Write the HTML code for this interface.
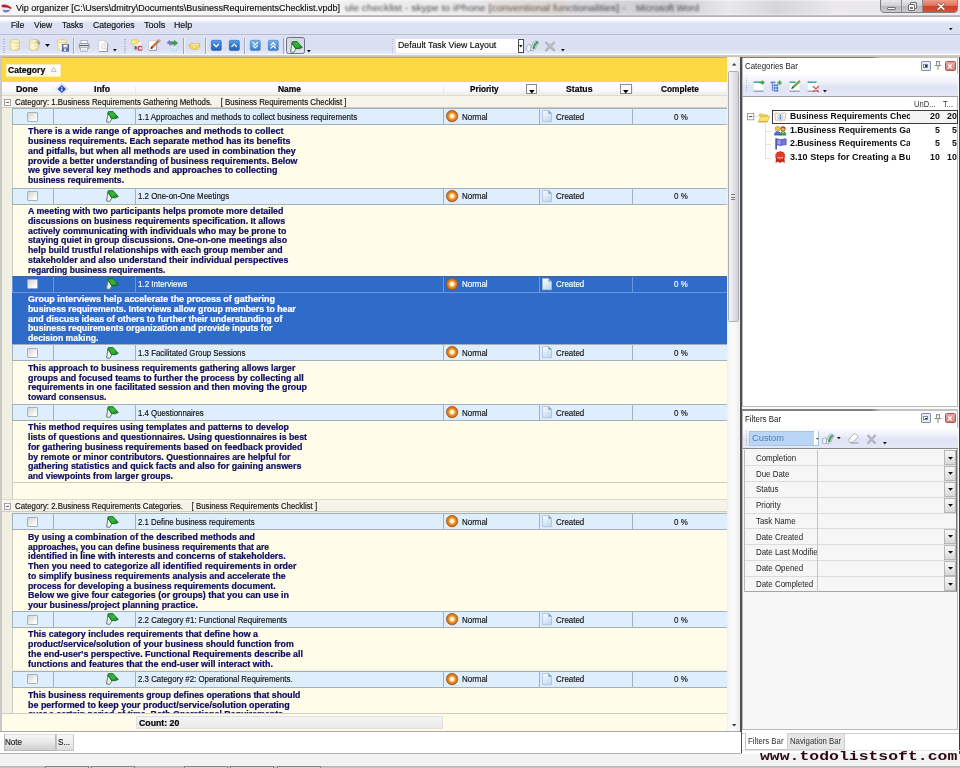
<!DOCTYPE html>
<html><head><meta charset="utf-8"><title>Vip organizer</title>
<style>
*{box-sizing:border-box;margin:0;padding:0}
html,body{width:960px;height:768px;overflow:hidden;background:#fff}
body{filter:blur(.35px);font-family:"Liberation Sans",sans-serif;font-size:9px;color:#000}
.a{position:absolute}
.t{position:absolute;white-space:pre;line-height:1;transform:scaleX(.9999);transform-origin:0 0}
svg{position:absolute;overflow:visible}
.row{background:#deeefc;border-top:1px solid #a3b1bd;border-bottom:1px solid #a3b1bd}
.row.sel{background:#2f6bc8;border-color:#6a97dc;border-top-color:#41649f}
.vs{background:#a3b1bd}
.sel .vs{background:#6a97dc}
.cb{border:1.2px solid #a7b0b9;border-radius:1px;background:linear-gradient(135deg,#d2d2d2,#ececec 50%,#fff 85%)}
.sel .cb{border-color:#8fa6cf}
.desc{background:#fffdea}
.desc.sel{background:#2f6bc8}
.dl{color:#0b0b60;font-weight:bold;-webkit-text-stroke:.22px #0b0b60}
.sel .dl{-webkit-text-stroke:.22px #fff}
.rt{-webkit-text-stroke:.16px currentColor}
.hb{-webkit-text-stroke:.2px #000}
.mono{font-family:"Liberation Mono",monospace}
.sel .dl,.dl.sel{color:#fff}
</style></head><body>
<div class="a " style="left:0px;top:0px;width:960px;height:17px;background:linear-gradient(90deg,#f6f6f7 0,#f3f3f4 30%,#e9e9eb 48%,#d9d9dc 60%,#cdcdd0 70%,#e9e8ec 76%,#d6d5d9 81%,#ebe9ee 87%,#e6e5ea 100%)"></div>
<div class="a " style="left:0px;top:0px;width:960px;height:15.3px;background:linear-gradient(rgba(255,255,255,.55),rgba(255,255,255,0) 12%,rgba(255,255,255,0) 80%,rgba(255,255,255,.25))"></div>
<div class="a " style="left:0px;top:15.3px;width:960px;height:1.8px;background:linear-gradient(#c4c4c6,#adadaf)"></div>
<div class="t rt" style="left:16.00px;top:3.68px;font-size:9.0px;color:#111;">Vip organizer [C:\Users\dmitry\Documents\BusinessRequirementsChecklist.vpdb]</div>
<div class="a " style="left:340px;top:0px;width:540px;height:15px;overflow:hidden"><div class="t " style="left:5.00px;top:4.41px;font-size:9.2px;transform:scaleX(1.1377);transform-origin:0 0;color:#2c2c2c;filter:blur(1.15px);opacity:.85;">ule checklist - skype to iPhone [conventional functionalities] -</div><div class="t " style="left:296.00px;top:4.41px;font-size:9.2px;transform:scaleX(1.0213);transform-origin:0 0;color:#2c2c2c;filter:blur(1.15px);opacity:.85;">Microsoft Word</div><div class="a " style="left:150px;top:3px;width:75px;height:10px;background:#c9a36a;opacity:.22;filter:blur(4px)"></div></div>
<svg style="left:0.4px;top:2.6px" width="12.5" height="11" viewBox="0 0 12.5 11"><ellipse cx="6.2" cy="5.6" rx="6" ry="5" fill="#f6e9ee"/>
<path d="M1.2 2.4C4 .6 7.6 1.8 11.4 4.6L11.2 6.2C7.6 4.4 4.6 3.8 2.6 4.6Z" fill="#c02436"/>
<path d="M2.4 3.2L6.6 4.2" stroke="#8e1423" stroke-width=".8"/>
<path d="M2.6 6.4C5 7.2 8 7.2 10.4 6.6C9 9.6 5.2 10.2 3.2 8.6Z" fill="#6d84d6"/></svg>
<div class="a " style="left:880.3px;top:-2px;width:78px;height:15px;border:1px solid #7f7f84;border-radius:0 0 4px 4px;overflow:hidden;background:#ccc"><div class="a " style="left:0px;top:0px;width:21px;height:15px;background:linear-gradient(#ececee,#d2d2d6 45%,#b9b9be 50%,#cfcfd3);border-right:1px solid #8b8b90"></div><div class="a " style="left:21px;top:0px;width:20.6px;height:15px;background:linear-gradient(#ececee,#d2d2d6 45%,#b9b9be 50%,#cfcfd3);border-right:1px solid #8b8b90"></div><div class="a " style="left:41.6px;top:0px;width:36px;height:15px;background:linear-gradient(#f0a592,#e0705a 45%,#cf4127 50%,#d9563c)"></div><div class="a " style="left:6.2px;top:7.6px;width:8.6px;height:3.2px;background:#fff;border:1px solid #6f6f74;border-radius:1px"></div><div class="a " style="left:28.4px;top:3.2px;width:7px;height:6.4px;background:#e8e8ea;border:1px solid #6f6f74;border-radius:1px"></div><div class="a " style="left:26.6px;top:5.2px;width:7px;height:6.4px;background:#f8f8fa;border:1px solid #6f6f74;border-radius:1px"></div><div class="a " style="left:28.8px;top:7.6px;width:2.6px;height:2.2px;background:#7b7b80"></div><svg style="left:55.6px;top:3.8px" width="8" height="7.2" viewBox="0 0 8 7.2"><path d="M1.2 1L6.8 6.2M6.8 1L1.2 6.2" stroke="#8a3a2a" stroke-width="2.6" stroke-linecap="round"/><path d="M1.2 1L6.8 6.2M6.8 1L1.2 6.2" stroke="#fff" stroke-width="1.7" stroke-linecap="round"/></svg></div>
<div class="a " style="left:0px;top:17px;width:960px;height:17.5px;background:linear-gradient(#fff 0,#fcfdff 14%,#e9edf8 26%,#dce1f3 36%,#dbe0f2 90%,#e9edf8 100%)"></div>
<div class="a " style="left:0px;top:34px;width:960px;height:1.2px;background:#b6bcd0"></div>
<div class="t rt" style="left:11.20px;top:21.47px;font-size:8.9px;transform:scaleX(0.9274);transform-origin:0 0;color:#101010;">File</div>
<div class="t rt" style="left:33.80px;top:21.47px;font-size:8.9px;transform:scaleX(0.9513);transform-origin:0 0;color:#101010;">View</div>
<div class="t rt" style="left:62.00px;top:21.47px;font-size:8.9px;transform:scaleX(0.9318);transform-origin:0 0;color:#101010;">Tasks</div>
<div class="t rt" style="left:92.50px;top:21.47px;font-size:8.9px;transform:scaleX(0.9689);transform-origin:0 0;color:#101010;">Categories</div>
<div class="t rt" style="left:143.70px;top:21.47px;font-size:8.9px;transform:scaleX(1.0252);transform-origin:0 0;color:#101010;">Tools</div>
<div class="t rt" style="left:174.20px;top:21.47px;font-size:8.9px;transform:scaleX(0.9943);transform-origin:0 0;color:#101010;">Help</div>
<div class="a " style="left:0px;top:35.2px;width:960px;height:19px;background:linear-gradient(#e1e6f5 0,#dbe0f2 12%,#dadff1 70%,#e7ecfa 100%)"></div>
<div class="a " style="left:0px;top:54.2px;width:960px;height:1px;background:#f8f9fe"></div>
<div class="a " style="left:0px;top:55.2px;width:960px;height:1.8px;background:linear-gradient(#d6cfd3,#c9bfa8)"></div>
<div class="a " style="left:3px;top:38.5px;width:1.6px;height:16px;background:repeating-linear-gradient(#aab2cb 0,#aab2cb 1px,transparent 1px,transparent 2.25px);opacity:.8"></div>
<svg style="left:9.8px;top:39.4px" width="12" height="12.5" viewBox="0 0 12 12.5"><defs><linearGradient id="dbg" x1="0" x2="1"><stop offset="0" stop-color="#efe3a4"/><stop offset=".35" stop-color="#fdf8d2"/><stop offset="1" stop-color="#dccb7e"/></linearGradient></defs>
<path d="M.4 2.2C.4 .2 9.6 .2 9.6 2.2V9.6C9.6 12 .4 12 .4 9.6Z" fill="url(#dbg)" stroke="#cdbd78" stroke-width=".6"/>
<ellipse cx="5" cy="2.2" rx="4.4" ry="1.5" fill="#fbf4c6" stroke="#d5c682" stroke-width=".5"/>
<path d="M.6 5C2 6.6 8 6.6 9.4 5M.6 7.6C2 9.2 8 9.2 9.4 7.6" fill="none" stroke="#fffbe0" stroke-width=".9"/></svg>
<svg style="left:28.6px;top:39.4px" width="12" height="12.5" viewBox="0 0 12 12.5"><defs><linearGradient id="dbg" x1="0" x2="1"><stop offset="0" stop-color="#efe3a4"/><stop offset=".35" stop-color="#fdf8d2"/><stop offset="1" stop-color="#dccb7e"/></linearGradient></defs>
<path d="M.4 2.2C.4 .2 9.6 .2 9.6 2.2V9.6C9.6 12 .4 12 .4 9.6Z" fill="url(#dbg)" stroke="#cdbd78" stroke-width=".6"/>
<ellipse cx="5" cy="2.2" rx="4.4" ry="1.5" fill="#fbf4c6" stroke="#d5c682" stroke-width=".5"/>
<path d="M.6 5C2 6.6 8 6.6 9.4 5M.6 7.6C2 9.2 8 9.2 9.4 7.6" fill="none" stroke="#fffbe0" stroke-width=".9"/><path d="M6.4 .4L9.4 .9L11.2 3.4L10.4 6.4L8.2 3.4Z" fill="#8a90a6" opacity=".85"/><path d="M6.6 1.2L8.8 1.6L9.6 3.4" stroke="#e8eaf2" stroke-width=".7" fill="none"/></svg>
<svg style="left:45px;top:44px" width="5" height="2.9" viewBox="0 0 5 2.9"><path d="M0 0H5L2.5 2.9Z" fill="#111"/></svg>
<svg style="left:57px;top:39.2px" width="12" height="12.5" viewBox="0 0 12 12.5"><defs><linearGradient id="dbg" x1="0" x2="1"><stop offset="0" stop-color="#efe3a4"/><stop offset=".35" stop-color="#fdf8d2"/><stop offset="1" stop-color="#dccb7e"/></linearGradient></defs>
<path d="M.4 2.2C.4 .2 9.6 .2 9.6 2.2V9.6C9.6 12 .4 12 .4 9.6Z" fill="url(#dbg)" stroke="#cdbd78" stroke-width=".6"/>
<ellipse cx="5" cy="2.2" rx="4.4" ry="1.5" fill="#fbf4c6" stroke="#d5c682" stroke-width=".5"/>
<path d="M.6 5C2 6.6 8 6.6 9.4 5M.6 7.6C2 9.2 8 9.2 9.4 7.6" fill="none" stroke="#fffbe0" stroke-width=".9"/><rect x="5.2" y="5.6" width="6.6" height="6.6" fill="#5b6fb8" stroke="#3f4f93" stroke-width=".5"/><rect x="6.4" y="5.8" width="4" height="2.6" fill="#eef0f8"/><rect x="7" y="9.6" width="3" height="2.4" fill="#dfe3f2"/><rect x="9" y="9.9" width=".9" height="1.8" fill="#2c396f"/></svg>
<div class="a " style="left:72.6px;top:38px;width:1.1px;height:15.5px;background:#9ea6c0"></div><div class="a " style="left:73.69999999999999px;top:38px;width:0.9px;height:15.5px;background:#eef1fa"></div>
<svg style="left:79px;top:40px" width="10.5" height="12" viewBox="0 0 10.5 12"><rect x="2" y=".4" width="6.4" height="3.4" fill="#fff" stroke="#8d93a6" stroke-width=".6"/>
<rect x=".4" y="3.6" width="9.6" height="4.8" rx=".8" fill="#e9ebf1" stroke="#70768a" stroke-width=".7"/>
<path d="M.6 5.6H9.8" stroke="#4b5164" stroke-width="1"/>
<rect x="1.8" y="7.4" width="6.8" height="4" fill="#fff" stroke="#8d93a6" stroke-width=".6"/><path d="M2.8 9.2H7.6M2.8 10.4H7.6" stroke="#b5b9c8" stroke-width=".5"/></svg>
<svg style="left:97.6px;top:39.8px" width="11" height="12.2" viewBox="0 0 11 12.2"><path d="M.6 .4H7.2L9.8 3V11.4H.6Z" fill="#fff" stroke="#b8bccb" stroke-width=".6"/>
<path d="M7.2 .4V3H9.8" fill="#e3e6ef" stroke="#b8bccb" stroke-width=".5"/>
<path d="M9.6 3.4V11.6H1.4" stroke="#8d92a4" stroke-width=".9" fill="none"/>
<circle cx="5.6" cy="6.4" r="2.4" fill="#f5f6fa" stroke="#c9ccd8" stroke-width=".7"/><path d="M7.3 8.2L9 10" stroke="#d79a9a" stroke-width=".9"/></svg>
<svg style="left:113px;top:49px" width="3.8" height="2.4" viewBox="0 0 3.8 2.4"><path d="M0 0H3.8L1.9 2.4Z" fill="#111"/></svg>
<div class="a " style="left:124.4px;top:38.5px;width:1.6px;height:16px;background:repeating-linear-gradient(#aab2cb 0,#aab2cb 1px,transparent 1px,transparent 2.25px);opacity:.8"></div>
<svg style="left:130.8px;top:39.4px" width="12.4" height="12" viewBox="0 0 12.4 12"><path d="M3 2.4H9.2L11 4.4V11.4H3Z" fill="#fff" stroke="#b9bdcc" stroke-width=".6"/>
<path d="M.4 .6H6.6L7.6 3.2L6.2 5.6H.4Z" fill="#f7e37a" stroke="#d9c24e" stroke-width=".5"/>
<path d="M1.6 2L4.8 3.1L1.6 4.4Z" fill="#fff7b0"/>
<rect x="3.6" y="7" width="2.2" height="3.6" fill="#5a5f78"/>
<circle cx="9" cy="9.2" r="2.6" fill="#d9414f"/><circle cx="9.3" cy="9.2" r="1.2" fill="#fff"/><rect x="9.6" y="8.6" width="2" height="1.2" fill="#fff" opacity=".9"/></svg>
<svg style="left:148.2px;top:39.4px" width="13" height="12" viewBox="0 0 13 12"><path d="M.6 1.8H8.4V11.2H.6Z" fill="#fff" stroke="#b8bccb" stroke-width=".6"/>
<path d="M8.6 6V11.4H1.2" stroke="#8d92a4" stroke-width=".8" fill="none"/>
<path d="M2.6 9.8L3.2 7.8L9.8 1.4L11.2 2.8L4.6 9.2Z" fill="#c9793a" stroke="#8a4e22" stroke-width=".4"/>
<path d="M9.6 1.2L11 .4L12.4 1.8L11.6 3Z" fill="#e8a0a0" stroke="#a55" stroke-width=".4"/>
<path d="M2.6 9.8L3.4 7.4L5.2 9Z" fill="#3d3d46"/></svg>
<svg style="left:167px;top:39.6px" width="11.6" height="12" viewBox="0 0 11.6 12"><path d="M.4 2.2L2.4 .6L4.4 2.2L3.2 2.6L4.4 4.6L3 5.2L1.8 3.2L.8 3.8Z" fill="#7b78c9" stroke="#5a56ad" stroke-width=".4"/>
<path d="M4.6 1.8H7.4V.4L10.8 3L7.4 5.6V4.2H4.6Z" fill="#32a546" stroke="#1e7d30" stroke-width=".5"/>
<path d="M3.6 6.4H10.2L9.4 11.2H4.6Z" fill="#cfe6f7" stroke="#a5cbe6" stroke-width=".5"/><path d="M4 7.4H9.8" stroke="#eff8ff" stroke-width=".8"/></svg>
<div class="a " style="left:182.6px;top:38px;width:1.1px;height:15.5px;background:#9ea6c0"></div><div class="a " style="left:183.7px;top:38px;width:0.9px;height:15.5px;background:#eef1fa"></div>
<svg style="left:188.2px;top:41.6px" width="12.4" height="8.6" viewBox="0 0 12.4 8.6"><path d="M.5 3.6L3.6 1.2L7.6 2L11.8 1.4L11.6 5L8.2 7.8L5.4 7.2L3.4 6.8Z" fill="#f4d867" stroke="#c9a93a" stroke-width=".6" stroke-linejoin="round"/>
<path d="M3.6 2L7.2 2.8L10.6 2.2" stroke="#fff4b8" stroke-width=".8" fill="none"/>
<ellipse cx="6.4" cy="4.8" rx="1.7" ry="1.1" fill="#fffbe2" stroke="#c9a93a" stroke-width=".4"/></svg>
<div class="a " style="left:204.6px;top:38px;width:1.1px;height:15.5px;background:#9ea6c0"></div><div class="a " style="left:205.7px;top:38px;width:0.9px;height:15.5px;background:#eef1fa"></div>
<svg style="left:210.5px;top:40.2px" width="10.6" height="10.9" viewBox="0 0 10.6 10.9"><defs><linearGradient id="bbdown" x1="0" y1="0" x2="0" y2="1"><stop offset="0" stop-color="#5fa0ea"/><stop offset=".5" stop-color="#2f78d0"/><stop offset="1" stop-color="#2a62b4"/></linearGradient></defs><rect x=".3" y=".3" width="10" height="10.3" rx="1.4" fill="url(#bbdown)" stroke="#2a62b4" stroke-width=".6"/><path d="M2.8 4.3L5.2 6.8L7.6 4.3" fill="none" stroke="#fff" stroke-width="1.25" stroke-linecap="round" stroke-linejoin="round"/></svg>
<svg style="left:228.7px;top:40.2px" width="10.6" height="10.9" viewBox="0 0 10.6 10.9"><defs><linearGradient id="bbup" x1="0" y1="0" x2="0" y2="1"><stop offset="0" stop-color="#5fa0ea"/><stop offset=".5" stop-color="#2f78d0"/><stop offset="1" stop-color="#2a62b4"/></linearGradient></defs><rect x=".3" y=".3" width="10" height="10.3" rx="1.4" fill="url(#bbup)" stroke="#2a62b4" stroke-width=".6"/><path d="M2.8 6.6L5.2 4.1L7.6 6.6" fill="none" stroke="#fff" stroke-width="1.25" stroke-linecap="round" stroke-linejoin="round"/></svg>
<div class="a " style="left:243.8px;top:38px;width:1.1px;height:15.5px;background:#9ea6c0"></div><div class="a " style="left:244.9px;top:38px;width:0.9px;height:15.5px;background:#eef1fa"></div>
<svg style="left:250.1px;top:40.1px" width="10.6" height="10.9" viewBox="0 0 10.6 10.9"><defs><linearGradient id="bbddown" x1="0" y1="0" x2="0" y2="1"><stop offset="0" stop-color="#7fb4e8"/><stop offset=".5" stop-color="#4f93d6"/><stop offset="1" stop-color="#3e7fc4"/></linearGradient></defs><rect x=".3" y=".3" width="10" height="10.3" rx="1.4" fill="url(#bbddown)" stroke="#3e7fc4" stroke-width=".6"/><path d="M2.9 2.6L5.2 4.9L7.5 2.6M2.9 5.6L5.2 7.9L7.5 5.6" fill="none" stroke="#fff" stroke-width="1.25" stroke-linecap="round" stroke-linejoin="round"/></svg>
<svg style="left:268.2px;top:40.1px" width="10.6" height="10.9" viewBox="0 0 10.6 10.9"><defs><linearGradient id="bbdup" x1="0" y1="0" x2="0" y2="1"><stop offset="0" stop-color="#7fb4e8"/><stop offset=".5" stop-color="#4f93d6"/><stop offset="1" stop-color="#3e7fc4"/></linearGradient></defs><rect x=".3" y=".3" width="10" height="10.3" rx="1.4" fill="url(#bbdup)" stroke="#3e7fc4" stroke-width=".6"/><path d="M2.9 5.1L5.2 2.8L7.5 5.1M2.9 8.1L5.2 5.8L7.5 8.1" fill="none" stroke="#fff" stroke-width="1.25" stroke-linecap="round" stroke-linejoin="round"/></svg>
<div class="a " style="left:283.4px;top:38px;width:1.1px;height:15.5px;background:#9ea6c0"></div><div class="a " style="left:284.5px;top:38px;width:0.9px;height:15.5px;background:#eef1fa"></div>
<div class="a " style="left:286.2px;top:37.3px;width:18.8px;height:16.8px;border:1.6px solid #6c7186;border-radius:2.5px;background:linear-gradient(#d3d6e0,#e0e3ec)"></div>
<svg style="left:289.8px;top:40.6px" width="13" height="12" viewBox="0 0 13 12"><defs><linearGradient id="gfg" x1="0" y1="0" x2="1" y2="1"><stop offset="0" stop-color="#2c9f2e"/><stop offset=".5" stop-color="#35b83a"/><stop offset="1" stop-color="#157a1c"/></linearGradient></defs>
<path d="M1.9 2.8L.5 10.8L3.5 11.5L5.8 8.2L3.2 3.8Z" fill="#eaf3ed" stroke="#5f7d6c" stroke-width="1" stroke-linejoin="round"/>
<path d="M2.2 .7L7 .5L12.3 6.4L9 7.8L5.5 7.4L3.3 3.7L1.7 3.1Z" fill="url(#gfg)" stroke="#0e5f16" stroke-width=".8" stroke-linejoin="round"/></svg>
<svg style="left:306.7px;top:49.6px" width="3.8" height="2.4" viewBox="0 0 3.8 2.4"><path d="M0 0H3.8L1.9 2.4Z" fill="#111"/></svg>
<div class="a " style="left:391.6px;top:38.5px;width:1.6px;height:16px;background:repeating-linear-gradient(#aab2cb 0,#aab2cb 1px,transparent 1px,transparent 2.25px);opacity:.8"></div>
<div class="a " style="left:395px;top:38px;width:128.6px;height:15.8px;background:#fff;border:1px solid #e3e6ef"></div>
<div class="t rt" style="left:397.50px;top:41.37px;font-size:8.9px;transform:scaleX(0.9889);transform-origin:0 0;color:#111;">Default Task View Layout</div>
<div class="a " style="left:517.7px;top:38.6px;width:6px;height:14.6px;background:#fff;border:1px solid #4c4c4c"><svg style="left:0.3px;top:5.4px" width="3.6" height="2.4" viewBox="0 0 3.6 2.4"><path d="M0 0H3.6L1.8 2.4Z" fill="#111"/></svg></div>
<svg style="left:526.4px;top:40px" width="13.4" height="12" viewBox="0 0 13.4 12"><path d="M.6 6.2L3 4.4L5 5.4V10.4L2.2 11.4L.6 10Z" fill="#f3f5fa" stroke="#8c93b3" stroke-width=".7"/>
<path d="M4.6 8.8L7.4 2.2L10 .8L12.6 2.6L10.8 5.4L8.6 9.8L5.8 11Z" fill="#eef1f9" stroke="#8c93b3" stroke-width=".7"/>
<path d="M6.4 8.6L8.4 3.4L10.6 2L11.4 3.2L9.6 5L8 9Z" fill="#3aa84c" stroke="#1f8434" stroke-width=".4"/>
<path d="M9.6 1.4L12.2 1.2L12 3.8Z" fill="#2c9a40"/></svg>
<svg style="left:545.2px;top:41px" width="10.4" height="10.4" viewBox="0 0 10.4 10.4"><path d="M1.2 1.6L9 9.2M9 1.6L1.2 9.2" stroke="#a9acb4" stroke-width="2.3" stroke-linecap="round"/><path d="M1.6 1.4L9 8.6M8.8 1.4L1.4 8.8" stroke="#c9ccd3" stroke-width=".8" stroke-linecap="round"/></svg>
<svg style="left:561.2px;top:49.4px" width="3.8" height="2.4" viewBox="0 0 3.8 2.4"><path d="M0 0H3.8L1.9 2.4Z" fill="#111"/></svg>
<svg style="left:949.4px;top:28.4px" width="3.6" height="2.3" viewBox="0 0 3.6 2.3"><path d="M0 0H3.6L1.8 2.3Z" fill="#111"/></svg>
<div class="a " style="left:0px;top:57px;width:741px;height:674px;background:#f1efe2"></div>
<div class="a " style="left:0px;top:56.6px;width:727.2px;height:25.5px;background:#fcd942;border-top:1px solid #bfac62"></div>
<div class="a " style="left:6px;top:64px;width:54.5px;height:12.5px;background:linear-gradient(#fffefa,#fffae6);border:1px solid #fbeeb4"></div>
<div class="t hb" style="left:7.80px;top:66.40px;font-size:9.1px;font-weight:bold;transform:scaleX(0.9431);transform-origin:0 0;">Category</div>
<svg style="left:50.6px;top:67.4px" width="6" height="5.4"><path d="M2.7 .5 L5.1 4.6 L.3 4.6 Z" fill="#fff" stroke="#9aa7c4" stroke-width=".7"/></svg>
<div class="a " style="left:2px;top:82px;width:725.5px;height:13px;background:linear-gradient(#fff,#fcfcfc 55%,#ececec)"></div>
<div class="t hb" style="left:16.00px;top:84.90px;font-size:9.1px;font-weight:bold;transform:scaleX(0.967);transform-origin:0 0;">Done</div>
<div class="t hb" style="left:93.80px;top:84.90px;font-size:9.1px;font-weight:bold;transform:scaleX(0.9714);transform-origin:0 0;">Info</div>
<div class="t hb" style="left:278.00px;top:84.90px;font-size:9.1px;font-weight:bold;transform:scaleX(0.9279);transform-origin:0 0;">Name</div>
<div class="t hb" style="left:470.00px;top:84.90px;font-size:9.1px;font-weight:bold;transform:scaleX(0.9008);transform-origin:0 0;">Priority</div>
<div class="t hb" style="left:566.00px;top:84.90px;font-size:9.1px;font-weight:bold;transform:scaleX(0.9528);transform-origin:0 0;">Status</div>
<div class="t hb" style="left:660.60px;top:84.90px;font-size:9.1px;font-weight:bold;transform:scaleX(0.9165);transform-origin:0 0;">Complete</div>
<div class="a " style="left:53px;top:86px;width:1px;height:8.5px;background:#ebebf0"></div>
<div class="a " style="left:135px;top:86px;width:1px;height:8.5px;background:#ebebf0"></div>
<div class="a " style="left:443.2px;top:86px;width:1px;height:8.5px;background:#ebebf0"></div>
<div class="a " style="left:538.6px;top:86px;width:1px;height:8.5px;background:#ebebf0"></div>
<div class="a " style="left:632.4px;top:86px;width:1px;height:8.5px;background:#ebebf0"></div>
<svg style="left:55px;top:83px" width="13.6" height="12" viewBox="0 0 13.6 12"><path d="M6.8 .4L13.2 6L6.8 11.6L.4 6Z" fill="#eaf1fe" stroke="#c3d6f6" stroke-width=".8"/>
<path d="M6.8 2.2L10.8 6L6.8 9.8L2.8 6Z" fill="#2c4ba3" stroke="#20397f" stroke-width=".4"/>
<rect x="6.25" y="3.7" width="1.1" height="1.1" fill="#fff"/><rect x="6.25" y="5.5" width="1.1" height="2.7" fill="#fff"/></svg>
<div class="a " style="left:525.5px;top:84.1px;width:11.7px;height:9.6px;border:1px solid #8c8c84;background:#fff"><svg style="left:2.1px;top:4.6px" width="5.6" height="3.4" viewBox="0 0 5.6 3.4"><path d="M0 0H5.6L2.8 3.4Z" fill="#000"/></svg></div>
<div class="a " style="left:620.2px;top:84.1px;width:11.7px;height:9.6px;border:1px solid #8c8c84;background:#fff"><svg style="left:2.1px;top:4.6px" width="5.6" height="3.4" viewBox="0 0 5.6 3.4"><path d="M0 0H5.6L2.8 3.4Z" fill="#000"/></svg></div>
<div class="a " style="left:2px;top:94.9px;width:725.5px;height:13.3px;background:#f6f4e8;border-top:1px solid #dddbcc;border-bottom:1px solid #cfcdc0"></div>
<svg style="left:4.2px;top:98.9px" width="7" height="7"><rect x=".4" y=".4" width="6" height="6" fill="#fff" stroke="#8f8f8f" stroke-width=".8"/><path d="M1.8 3.4H5" stroke="#333" stroke-width=".8"/></svg>
<div class="t rt" style="left:14.50px;top:97.91px;font-size:9.2px;transform:scaleX(0.8554);transform-origin:0 0;color:#101010;">Category: 1.Business Requirements Gathering Methods.    [ Business Requirements Checklist ]</div>
<div class="a " style="left:2px;top:499.2px;width:725.5px;height:13.3px;background:#f6f4e8;border-top:1px solid #dddbcc;border-bottom:1px solid #cfcdc0"></div>
<svg style="left:4.2px;top:503.2px" width="7" height="7"><rect x=".4" y=".4" width="6" height="6" fill="#fff" stroke="#8f8f8f" stroke-width=".8"/><path d="M1.8 3.4H5" stroke="#333" stroke-width=".8"/></svg>
<div class="t rt" style="left:14.50px;top:502.21px;font-size:9.2px;transform:scaleX(0.8537);transform-origin:0 0;color:#101010;">Category: 2.Business Requirements Categories.    [ Business Requirements Checklist ]</div>
<div class="a " style="left:12px;top:481.8px;width:714.8px;height:17.7px;background:#fffdea;border-top:1px solid #cfcdc0;border-left:1px solid #cfcdc0"></div>
<div class="a desc" style="left:12px;top:124.5px;width:714.8px;height:63.099999999999994px;border-left:1px solid #cfcdc0;overflow:hidden"><div class="t dl" style="left:15.30px;top:2.98px;font-size:9.0px;font-weight:bold;transform:scaleX(0.9974);transform-origin:0 0;">There is a wide range of approaches and methods to collect</div><div class="t dl" style="left:15.30px;top:12.73px;font-size:9.0px;font-weight:bold;transform:scaleX(0.9806);transform-origin:0 0;">business requirements. Each separate method has its benefits</div><div class="t dl" style="left:15.30px;top:22.48px;font-size:9.0px;font-weight:bold;transform:scaleX(0.9859);transform-origin:0 0;">and pitfalls, but when all methods are used in combination they</div><div class="t dl" style="left:15.30px;top:32.23px;font-size:9.0px;font-weight:bold;transform:scaleX(0.9759);transform-origin:0 0;">provide a better understanding of business requirements. Below</div><div class="t dl" style="left:15.30px;top:41.98px;font-size:9.0px;font-weight:bold;transform:scaleX(0.9953);transform-origin:0 0;">we give several key methods and approaches to collecting</div><div class="t dl" style="left:15.30px;top:51.73px;font-size:9.0px;font-weight:bold;transform:scaleX(0.9502);transform-origin:0 0;">business requirements.</div></div>
<div class="a row" style="left:12px;top:108.0px;width:714.8px;height:17px;border-left:1px solid #a3b1bd"><div class="a vs" style="left:40px;top:0;width:1px;height:15px"></div><div class="a vs" style="left:122px;top:0;width:1px;height:15px"></div><div class="a vs" style="left:430.3px;top:0;width:1px;height:15px"></div><div class="a vs" style="left:525.7px;top:0;width:1px;height:15px"></div><div class="a vs" style="left:618.9px;top:0;width:1px;height:15px"></div><div class="a cb" style="left:14.4px;top:2.7px;width:10.4px;height:10px"></div><div class="t rt" style="left:124.50px;top:3.81px;font-size:9.2px;transform:scaleX(0.8653);transform-origin:0 0;color:#101010;">1.1 Approaches and methods to collect business requirements</div><div class="t rt" style="left:448.70px;top:3.81px;font-size:9.2px;transform:scaleX(0.865);transform-origin:0 0;color:#101010;">Normal</div><div class="t rt" style="left:542.80px;top:3.81px;font-size:9.2px;transform:scaleX(0.865);transform-origin:0 0;color:#101010;">Created</div><div class="t rt" style="left:660.50px;top:3.81px;font-size:9.2px;transform:scaleX(0.865);transform-origin:0 0;color:#101010;">0 %</div><svg style="left:93px;top:1.6px" width="13" height="12" viewBox="0 0 13 12"><defs><linearGradient id="gfg" x1="0" y1="0" x2="1" y2="1"><stop offset="0" stop-color="#2c9f2e"/><stop offset=".5" stop-color="#35b83a"/><stop offset="1" stop-color="#157a1c"/></linearGradient></defs>
<path d="M1.9 2.8L.5 10.8L3.5 11.5L5.8 8.2L3.2 3.8Z" fill="#eaf3ed" stroke="#5f7d6c" stroke-width="1" stroke-linejoin="round"/>
<path d="M2.2 .7L7 .5L12.3 6.4L9 7.8L5.5 7.4L3.3 3.7L1.7 3.1Z" fill="url(#gfg)" stroke="#0e5f16" stroke-width=".8" stroke-linejoin="round"/></svg><svg style="left:433.3px;top:1.2px" width="12.2" height="12.2" viewBox="0 0 12.2 12.2"><defs><radialGradient id="prg" cx=".5" cy=".5" r=".55"><stop offset="0" stop-color="#fff8d8"/><stop offset=".3" stop-color="#ffefc0"/><stop offset=".44" stop-color="#efa448"/><stop offset=".75" stop-color="#d27416"/><stop offset="1" stop-color="#a9570d"/></radialGradient></defs>
<circle cx="6.1" cy="6.1" r="5.8" fill="url(#prg)" stroke="#9c561a" stroke-width=".6"/></svg><svg style="left:529.2px;top:1.2px" width="10" height="12.2" viewBox="0 0 10 12.2"><defs><linearGradient id="dcg" x1="0" y1="0" x2=".6" y2="1"><stop offset="0" stop-color="#fdfeff"/><stop offset="1" stop-color="#c2dbf3"/></linearGradient></defs>
<path d="M.5 .5H6.6L9.5 3.4V11.7H.5Z" fill="url(#dcg)" stroke="#a4bedb" stroke-width=".8"/>
<path d="M6.6 .5V3.4H9.5Z" fill="#7d9cc4" stroke="#7d9cc4" stroke-width=".4"/></svg></div>
<div class="a desc" style="left:12px;top:204.1px;width:714.8px;height:71.50000000000003px;border-left:1px solid #cfcdc0;overflow:hidden"><div class="t dl" style="left:15.30px;top:2.98px;font-size:9.0px;font-weight:bold;transform:scaleX(0.9797);transform-origin:0 0;">A meeting with two participants helps promote more detailed</div><div class="t dl" style="left:15.30px;top:12.73px;font-size:9.0px;font-weight:bold;transform:scaleX(0.9714);transform-origin:0 0;">discussions on business requirements specification. It allows</div><div class="t dl" style="left:15.30px;top:22.48px;font-size:9.0px;font-weight:bold;transform:scaleX(0.9768);transform-origin:0 0;">actively communicating with individuals who may be prone to</div><div class="t dl" style="left:15.30px;top:32.23px;font-size:9.0px;font-weight:bold;transform:scaleX(0.9717);transform-origin:0 0;">staying quiet in group discussions. One-on-one meetings also</div><div class="t dl" style="left:15.30px;top:41.98px;font-size:9.0px;font-weight:bold;transform:scaleX(0.972);transform-origin:0 0;">help build trustful relationships with each group member and</div><div class="t dl" style="left:15.30px;top:51.73px;font-size:9.0px;font-weight:bold;transform:scaleX(0.9824);transform-origin:0 0;">stakeholder and also understand their individual perspectives</div><div class="t dl" style="left:15.30px;top:61.48px;font-size:9.0px;font-weight:bold;transform:scaleX(0.9473);transform-origin:0 0;">regarding business requirements.</div></div>
<div class="a row" style="left:12px;top:187.6px;width:714.8px;height:17px;border-left:1px solid #a3b1bd"><div class="a vs" style="left:40px;top:0;width:1px;height:15px"></div><div class="a vs" style="left:122px;top:0;width:1px;height:15px"></div><div class="a vs" style="left:430.3px;top:0;width:1px;height:15px"></div><div class="a vs" style="left:525.7px;top:0;width:1px;height:15px"></div><div class="a vs" style="left:618.9px;top:0;width:1px;height:15px"></div><div class="a cb" style="left:14.4px;top:2.7px;width:10.4px;height:10px"></div><div class="t rt" style="left:124.50px;top:3.81px;font-size:9.2px;transform:scaleX(0.8574);transform-origin:0 0;color:#101010;">1.2 One-on-One Meetings</div><div class="t rt" style="left:448.70px;top:3.81px;font-size:9.2px;transform:scaleX(0.865);transform-origin:0 0;color:#101010;">Normal</div><div class="t rt" style="left:542.80px;top:3.81px;font-size:9.2px;transform:scaleX(0.865);transform-origin:0 0;color:#101010;">Created</div><div class="t rt" style="left:660.50px;top:3.81px;font-size:9.2px;transform:scaleX(0.865);transform-origin:0 0;color:#101010;">0 %</div><svg style="left:93px;top:1.6px" width="13" height="12" viewBox="0 0 13 12"><defs><linearGradient id="gfg" x1="0" y1="0" x2="1" y2="1"><stop offset="0" stop-color="#2c9f2e"/><stop offset=".5" stop-color="#35b83a"/><stop offset="1" stop-color="#157a1c"/></linearGradient></defs>
<path d="M1.9 2.8L.5 10.8L3.5 11.5L5.8 8.2L3.2 3.8Z" fill="#eaf3ed" stroke="#5f7d6c" stroke-width="1" stroke-linejoin="round"/>
<path d="M2.2 .7L7 .5L12.3 6.4L9 7.8L5.5 7.4L3.3 3.7L1.7 3.1Z" fill="url(#gfg)" stroke="#0e5f16" stroke-width=".8" stroke-linejoin="round"/></svg><svg style="left:433.3px;top:1.2px" width="12.2" height="12.2" viewBox="0 0 12.2 12.2"><defs><radialGradient id="prg" cx=".5" cy=".5" r=".55"><stop offset="0" stop-color="#fff8d8"/><stop offset=".3" stop-color="#ffefc0"/><stop offset=".44" stop-color="#efa448"/><stop offset=".75" stop-color="#d27416"/><stop offset="1" stop-color="#a9570d"/></radialGradient></defs>
<circle cx="6.1" cy="6.1" r="5.8" fill="url(#prg)" stroke="#9c561a" stroke-width=".6"/></svg><svg style="left:529.2px;top:1.2px" width="10" height="12.2" viewBox="0 0 10 12.2"><defs><linearGradient id="dcg" x1="0" y1="0" x2=".6" y2="1"><stop offset="0" stop-color="#fdfeff"/><stop offset="1" stop-color="#c2dbf3"/></linearGradient></defs>
<path d="M.5 .5H6.6L9.5 3.4V11.7H.5Z" fill="url(#dcg)" stroke="#a4bedb" stroke-width=".8"/>
<path d="M6.6 .5V3.4H9.5Z" fill="#7d9cc4" stroke="#7d9cc4" stroke-width=".4"/></svg></div>
<div class="a desc sel" style="left:12px;top:292.1px;width:714.8px;height:52.19999999999999px;border-left:1px solid #2f6bc8;overflow:hidden"><div class="t dl" style="left:15.30px;top:2.98px;font-size:9.0px;font-weight:bold;transform:scaleX(0.9937);transform-origin:0 0;">Group interviews help accelerate the process of gathering</div><div class="t dl" style="left:15.30px;top:12.73px;font-size:9.0px;font-weight:bold;transform:scaleX(0.9714);transform-origin:0 0;">business requirements. Interviews allow group members to hear</div><div class="t dl" style="left:15.30px;top:22.48px;font-size:9.0px;font-weight:bold;transform:scaleX(0.9821);transform-origin:0 0;">and discuss ideas of others to further their understanding of</div><div class="t dl" style="left:15.30px;top:32.23px;font-size:9.0px;font-weight:bold;transform:scaleX(0.9697);transform-origin:0 0;">business requirements organization and provide inputs for</div><div class="t dl" style="left:15.30px;top:41.98px;font-size:9.0px;font-weight:bold;transform:scaleX(0.9641);transform-origin:0 0;">decision making.</div></div>
<div class="a row sel" style="left:12px;top:275.6px;width:714.8px;height:17px;border-left:1px solid #6a97dc"><div class="a vs" style="left:40px;top:0;width:1px;height:15px"></div><div class="a vs" style="left:122px;top:0;width:1px;height:15px"></div><div class="a vs" style="left:430.3px;top:0;width:1px;height:15px"></div><div class="a vs" style="left:525.7px;top:0;width:1px;height:15px"></div><div class="a vs" style="left:618.9px;top:0;width:1px;height:15px"></div><div class="a cb" style="left:14.4px;top:2.7px;width:10.4px;height:10px"></div><div class="t rt" style="left:124.50px;top:3.81px;font-size:9.2px;transform:scaleX(0.8668);transform-origin:0 0;color:#fff;">1.2 Interviews</div><div class="t rt" style="left:448.70px;top:3.81px;font-size:9.2px;transform:scaleX(0.865);transform-origin:0 0;color:#fff;">Normal</div><div class="t rt" style="left:542.80px;top:3.81px;font-size:9.2px;transform:scaleX(0.865);transform-origin:0 0;color:#fff;">Created</div><div class="t rt" style="left:660.50px;top:3.81px;font-size:9.2px;transform:scaleX(0.865);transform-origin:0 0;color:#fff;">0 %</div><svg style="left:93px;top:1.6px" width="13" height="12" viewBox="0 0 13 12"><defs><linearGradient id="gfg" x1="0" y1="0" x2="1" y2="1"><stop offset="0" stop-color="#2c9f2e"/><stop offset=".5" stop-color="#35b83a"/><stop offset="1" stop-color="#157a1c"/></linearGradient></defs>
<path d="M1.9 2.8L.5 10.8L3.5 11.5L5.8 8.2L3.2 3.8Z" fill="#eaf3ed" stroke="#5f7d6c" stroke-width="1" stroke-linejoin="round"/>
<path d="M2.2 .7L7 .5L12.3 6.4L9 7.8L5.5 7.4L3.3 3.7L1.7 3.1Z" fill="url(#gfg)" stroke="#0e5f16" stroke-width=".8" stroke-linejoin="round"/></svg><svg style="left:433.3px;top:1.2px" width="12.2" height="12.2" viewBox="0 0 12.2 12.2"><defs><radialGradient id="prg" cx=".5" cy=".5" r=".55"><stop offset="0" stop-color="#fff8d8"/><stop offset=".3" stop-color="#ffefc0"/><stop offset=".44" stop-color="#efa448"/><stop offset=".75" stop-color="#d27416"/><stop offset="1" stop-color="#a9570d"/></radialGradient></defs>
<circle cx="6.1" cy="6.1" r="5.8" fill="url(#prg)" stroke="#9c561a" stroke-width=".6"/></svg><svg style="left:529.2px;top:1.2px" width="10" height="12.2" viewBox="0 0 10 12.2"><defs><linearGradient id="dcg" x1="0" y1="0" x2=".6" y2="1"><stop offset="0" stop-color="#fdfeff"/><stop offset="1" stop-color="#c2dbf3"/></linearGradient></defs>
<path d="M.5 .5H6.6L9.5 3.4V11.7H.5Z" fill="url(#dcg)" stroke="#a4bedb" stroke-width=".8"/>
<path d="M6.6 .5V3.4H9.5Z" fill="#7d9cc4" stroke="#7d9cc4" stroke-width=".4"/></svg></div>
<div class="a desc" style="left:12px;top:360.8px;width:714.8px;height:43.0px;border-left:1px solid #cfcdc0;overflow:hidden"><div class="t dl" style="left:15.30px;top:2.98px;font-size:9.0px;font-weight:bold;transform:scaleX(0.9739);transform-origin:0 0;">This approach to business requirements gathering allows larger</div><div class="t dl" style="left:15.30px;top:12.73px;font-size:9.0px;font-weight:bold;transform:scaleX(0.9845);transform-origin:0 0;">groups and focused teams to further the process by collecting all</div><div class="t dl" style="left:15.30px;top:22.48px;font-size:9.0px;font-weight:bold;transform:scaleX(0.9788);transform-origin:0 0;">requirements in one facilitated session and then moving the group</div><div class="t dl" style="left:15.30px;top:32.23px;font-size:9.0px;font-weight:bold;transform:scaleX(0.9617);transform-origin:0 0;">toward consensus.</div></div>
<div class="a row" style="left:12px;top:344.3px;width:714.8px;height:17px;border-left:1px solid #a3b1bd"><div class="a vs" style="left:40px;top:0;width:1px;height:15px"></div><div class="a vs" style="left:122px;top:0;width:1px;height:15px"></div><div class="a vs" style="left:430.3px;top:0;width:1px;height:15px"></div><div class="a vs" style="left:525.7px;top:0;width:1px;height:15px"></div><div class="a vs" style="left:618.9px;top:0;width:1px;height:15px"></div><div class="a cb" style="left:14.4px;top:2.7px;width:10.4px;height:10px"></div><div class="t rt" style="left:124.50px;top:3.81px;font-size:9.2px;transform:scaleX(0.858);transform-origin:0 0;color:#101010;">1.3 Facilitated Group Sessions</div><div class="t rt" style="left:448.70px;top:3.81px;font-size:9.2px;transform:scaleX(0.865);transform-origin:0 0;color:#101010;">Normal</div><div class="t rt" style="left:542.80px;top:3.81px;font-size:9.2px;transform:scaleX(0.865);transform-origin:0 0;color:#101010;">Created</div><div class="t rt" style="left:660.50px;top:3.81px;font-size:9.2px;transform:scaleX(0.865);transform-origin:0 0;color:#101010;">0 %</div><svg style="left:93px;top:1.6px" width="13" height="12" viewBox="0 0 13 12"><defs><linearGradient id="gfg" x1="0" y1="0" x2="1" y2="1"><stop offset="0" stop-color="#2c9f2e"/><stop offset=".5" stop-color="#35b83a"/><stop offset="1" stop-color="#157a1c"/></linearGradient></defs>
<path d="M1.9 2.8L.5 10.8L3.5 11.5L5.8 8.2L3.2 3.8Z" fill="#eaf3ed" stroke="#5f7d6c" stroke-width="1" stroke-linejoin="round"/>
<path d="M2.2 .7L7 .5L12.3 6.4L9 7.8L5.5 7.4L3.3 3.7L1.7 3.1Z" fill="url(#gfg)" stroke="#0e5f16" stroke-width=".8" stroke-linejoin="round"/></svg><svg style="left:433.3px;top:1.2px" width="12.2" height="12.2" viewBox="0 0 12.2 12.2"><defs><radialGradient id="prg" cx=".5" cy=".5" r=".55"><stop offset="0" stop-color="#fff8d8"/><stop offset=".3" stop-color="#ffefc0"/><stop offset=".44" stop-color="#efa448"/><stop offset=".75" stop-color="#d27416"/><stop offset="1" stop-color="#a9570d"/></radialGradient></defs>
<circle cx="6.1" cy="6.1" r="5.8" fill="url(#prg)" stroke="#9c561a" stroke-width=".6"/></svg><svg style="left:529.2px;top:1.2px" width="10" height="12.2" viewBox="0 0 10 12.2"><defs><linearGradient id="dcg" x1="0" y1="0" x2=".6" y2="1"><stop offset="0" stop-color="#fdfeff"/><stop offset="1" stop-color="#c2dbf3"/></linearGradient></defs>
<path d="M.5 .5H6.6L9.5 3.4V11.7H.5Z" fill="url(#dcg)" stroke="#a4bedb" stroke-width=".8"/>
<path d="M6.6 .5V3.4H9.5Z" fill="#7d9cc4" stroke="#7d9cc4" stroke-width=".4"/></svg></div>
<div class="a desc" style="left:12px;top:420.3px;width:714.8px;height:61.5px;border-left:1px solid #cfcdc0;overflow:hidden"><div class="t dl" style="left:15.30px;top:2.98px;font-size:9.0px;font-weight:bold;transform:scaleX(0.9792);transform-origin:0 0;">This method requires using templates and patterns to develop</div><div class="t dl" style="left:15.30px;top:12.73px;font-size:9.0px;font-weight:bold;transform:scaleX(0.9736);transform-origin:0 0;">lists of questions and questionnaires. Using questionnaires is best</div><div class="t dl" style="left:15.30px;top:22.48px;font-size:9.0px;font-weight:bold;transform:scaleX(0.978);transform-origin:0 0;">for gathering business requirements based on feedback provided</div><div class="t dl" style="left:15.30px;top:32.23px;font-size:9.0px;font-weight:bold;transform:scaleX(0.9699);transform-origin:0 0;">by remote or minor contributors. Questionnaires are helpful for</div><div class="t dl" style="left:15.30px;top:41.98px;font-size:9.0px;font-weight:bold;transform:scaleX(0.9868);transform-origin:0 0;">gathering statistics and quick facts and also for gaining answers</div><div class="t dl" style="left:15.30px;top:51.73px;font-size:9.0px;font-weight:bold;transform:scaleX(0.9633);transform-origin:0 0;">and viewpoints from larger groups.</div></div>
<div class="a row" style="left:12px;top:403.8px;width:714.8px;height:17px;border-left:1px solid #a3b1bd"><div class="a vs" style="left:40px;top:0;width:1px;height:15px"></div><div class="a vs" style="left:122px;top:0;width:1px;height:15px"></div><div class="a vs" style="left:430.3px;top:0;width:1px;height:15px"></div><div class="a vs" style="left:525.7px;top:0;width:1px;height:15px"></div><div class="a vs" style="left:618.9px;top:0;width:1px;height:15px"></div><div class="a cb" style="left:14.4px;top:2.7px;width:10.4px;height:10px"></div><div class="t rt" style="left:124.50px;top:3.81px;font-size:9.2px;transform:scaleX(0.8521);transform-origin:0 0;color:#101010;">1.4 Questionnaires</div><div class="t rt" style="left:448.70px;top:3.81px;font-size:9.2px;transform:scaleX(0.865);transform-origin:0 0;color:#101010;">Normal</div><div class="t rt" style="left:542.80px;top:3.81px;font-size:9.2px;transform:scaleX(0.865);transform-origin:0 0;color:#101010;">Created</div><div class="t rt" style="left:660.50px;top:3.81px;font-size:9.2px;transform:scaleX(0.865);transform-origin:0 0;color:#101010;">0 %</div><svg style="left:93px;top:1.6px" width="13" height="12" viewBox="0 0 13 12"><defs><linearGradient id="gfg" x1="0" y1="0" x2="1" y2="1"><stop offset="0" stop-color="#2c9f2e"/><stop offset=".5" stop-color="#35b83a"/><stop offset="1" stop-color="#157a1c"/></linearGradient></defs>
<path d="M1.9 2.8L.5 10.8L3.5 11.5L5.8 8.2L3.2 3.8Z" fill="#eaf3ed" stroke="#5f7d6c" stroke-width="1" stroke-linejoin="round"/>
<path d="M2.2 .7L7 .5L12.3 6.4L9 7.8L5.5 7.4L3.3 3.7L1.7 3.1Z" fill="url(#gfg)" stroke="#0e5f16" stroke-width=".8" stroke-linejoin="round"/></svg><svg style="left:433.3px;top:1.2px" width="12.2" height="12.2" viewBox="0 0 12.2 12.2"><defs><radialGradient id="prg" cx=".5" cy=".5" r=".55"><stop offset="0" stop-color="#fff8d8"/><stop offset=".3" stop-color="#ffefc0"/><stop offset=".44" stop-color="#efa448"/><stop offset=".75" stop-color="#d27416"/><stop offset="1" stop-color="#a9570d"/></radialGradient></defs>
<circle cx="6.1" cy="6.1" r="5.8" fill="url(#prg)" stroke="#9c561a" stroke-width=".6"/></svg><svg style="left:529.2px;top:1.2px" width="10" height="12.2" viewBox="0 0 10 12.2"><defs><linearGradient id="dcg" x1="0" y1="0" x2=".6" y2="1"><stop offset="0" stop-color="#fdfeff"/><stop offset="1" stop-color="#c2dbf3"/></linearGradient></defs>
<path d="M.5 .5H6.6L9.5 3.4V11.7H.5Z" fill="url(#dcg)" stroke="#a4bedb" stroke-width=".8"/>
<path d="M6.6 .5V3.4H9.5Z" fill="#7d9cc4" stroke="#7d9cc4" stroke-width=".4"/></svg></div>
<div class="a desc" style="left:12px;top:529.8px;width:714.8px;height:81.10000000000002px;border-left:1px solid #cfcdc0;overflow:hidden"><div class="t dl" style="left:15.30px;top:2.98px;font-size:9.0px;font-weight:bold;transform:scaleX(0.9783);transform-origin:0 0;">By using a combination of the described methods and</div><div class="t dl" style="left:15.30px;top:12.73px;font-size:9.0px;font-weight:bold;transform:scaleX(0.9467);transform-origin:0 0;">approaches, you can define business requirements that are</div><div class="t dl" style="left:15.30px;top:22.48px;font-size:9.0px;font-weight:bold;transform:scaleX(0.9853);transform-origin:0 0;">identified in line with interests and concerns of stakeholders.</div><div class="t dl" style="left:15.30px;top:32.23px;font-size:9.0px;font-weight:bold;transform:scaleX(0.9866);transform-origin:0 0;">Then you need to categorize all identified requirements in order</div><div class="t dl" style="left:15.30px;top:41.98px;font-size:9.0px;font-weight:bold;transform:scaleX(0.9721);transform-origin:0 0;">to simplify business requirements analysis and accelerate the</div><div class="t dl" style="left:15.30px;top:51.73px;font-size:9.0px;font-weight:bold;transform:scaleX(0.9692);transform-origin:0 0;">process for developing a business requirements document.</div><div class="t dl" style="left:15.30px;top:61.48px;font-size:9.0px;font-weight:bold;transform:scaleX(0.9903);transform-origin:0 0;">Below we give four categories (or groups) that you can use in</div><div class="t dl" style="left:15.30px;top:71.23px;font-size:9.0px;font-weight:bold;transform:scaleX(0.9824);transform-origin:0 0;">your business/project planning practice.</div></div>
<div class="a row" style="left:12px;top:513.3px;width:714.8px;height:17px;border-left:1px solid #a3b1bd"><div class="a vs" style="left:40px;top:0;width:1px;height:15px"></div><div class="a vs" style="left:122px;top:0;width:1px;height:15px"></div><div class="a vs" style="left:430.3px;top:0;width:1px;height:15px"></div><div class="a vs" style="left:525.7px;top:0;width:1px;height:15px"></div><div class="a vs" style="left:618.9px;top:0;width:1px;height:15px"></div><div class="a cb" style="left:14.4px;top:2.7px;width:10.4px;height:10px"></div><div class="t rt" style="left:124.50px;top:3.81px;font-size:9.2px;transform:scaleX(0.8522);transform-origin:0 0;color:#101010;">2.1 Define business requirements</div><div class="t rt" style="left:448.70px;top:3.81px;font-size:9.2px;transform:scaleX(0.865);transform-origin:0 0;color:#101010;">Normal</div><div class="t rt" style="left:542.80px;top:3.81px;font-size:9.2px;transform:scaleX(0.865);transform-origin:0 0;color:#101010;">Created</div><div class="t rt" style="left:660.50px;top:3.81px;font-size:9.2px;transform:scaleX(0.865);transform-origin:0 0;color:#101010;">0 %</div><svg style="left:93px;top:1.6px" width="13" height="12" viewBox="0 0 13 12"><defs><linearGradient id="gfg" x1="0" y1="0" x2="1" y2="1"><stop offset="0" stop-color="#2c9f2e"/><stop offset=".5" stop-color="#35b83a"/><stop offset="1" stop-color="#157a1c"/></linearGradient></defs>
<path d="M1.9 2.8L.5 10.8L3.5 11.5L5.8 8.2L3.2 3.8Z" fill="#eaf3ed" stroke="#5f7d6c" stroke-width="1" stroke-linejoin="round"/>
<path d="M2.2 .7L7 .5L12.3 6.4L9 7.8L5.5 7.4L3.3 3.7L1.7 3.1Z" fill="url(#gfg)" stroke="#0e5f16" stroke-width=".8" stroke-linejoin="round"/></svg><svg style="left:433.3px;top:1.2px" width="12.2" height="12.2" viewBox="0 0 12.2 12.2"><defs><radialGradient id="prg" cx=".5" cy=".5" r=".55"><stop offset="0" stop-color="#fff8d8"/><stop offset=".3" stop-color="#ffefc0"/><stop offset=".44" stop-color="#efa448"/><stop offset=".75" stop-color="#d27416"/><stop offset="1" stop-color="#a9570d"/></radialGradient></defs>
<circle cx="6.1" cy="6.1" r="5.8" fill="url(#prg)" stroke="#9c561a" stroke-width=".6"/></svg><svg style="left:529.2px;top:1.2px" width="10" height="12.2" viewBox="0 0 10 12.2"><defs><linearGradient id="dcg" x1="0" y1="0" x2=".6" y2="1"><stop offset="0" stop-color="#fdfeff"/><stop offset="1" stop-color="#c2dbf3"/></linearGradient></defs>
<path d="M.5 .5H6.6L9.5 3.4V11.7H.5Z" fill="url(#dcg)" stroke="#a4bedb" stroke-width=".8"/>
<path d="M6.6 .5V3.4H9.5Z" fill="#7d9cc4" stroke="#7d9cc4" stroke-width=".4"/></svg></div>
<div class="a desc" style="left:12px;top:627.4px;width:714.8px;height:43.10000000000002px;border-left:1px solid #cfcdc0;overflow:hidden"><div class="t dl" style="left:15.30px;top:2.98px;font-size:9.0px;font-weight:bold;transform:scaleX(0.9869);transform-origin:0 0;">This category includes requirements that define how a</div><div class="t dl" style="left:15.30px;top:12.73px;font-size:9.0px;font-weight:bold;transform:scaleX(0.9786);transform-origin:0 0;">product/service/solution of your business should function from</div><div class="t dl" style="left:15.30px;top:22.48px;font-size:9.0px;font-weight:bold;transform:scaleX(0.9866);transform-origin:0 0;">the end-user's perspective. Functional Requirements describe all</div><div class="t dl" style="left:15.30px;top:32.23px;font-size:9.0px;font-weight:bold;transform:scaleX(0.9918);transform-origin:0 0;">functions and features that the end-user will interact with.</div></div>
<div class="a row" style="left:12px;top:610.9px;width:714.8px;height:17px;border-left:1px solid #a3b1bd"><div class="a vs" style="left:40px;top:0;width:1px;height:15px"></div><div class="a vs" style="left:122px;top:0;width:1px;height:15px"></div><div class="a vs" style="left:430.3px;top:0;width:1px;height:15px"></div><div class="a vs" style="left:525.7px;top:0;width:1px;height:15px"></div><div class="a vs" style="left:618.9px;top:0;width:1px;height:15px"></div><div class="a cb" style="left:14.4px;top:2.7px;width:10.4px;height:10px"></div><div class="t rt" style="left:124.50px;top:3.81px;font-size:9.2px;transform:scaleX(0.8632);transform-origin:0 0;color:#101010;">2.2 Category #1: Functional Requirements</div><div class="t rt" style="left:448.70px;top:3.81px;font-size:9.2px;transform:scaleX(0.865);transform-origin:0 0;color:#101010;">Normal</div><div class="t rt" style="left:542.80px;top:3.81px;font-size:9.2px;transform:scaleX(0.865);transform-origin:0 0;color:#101010;">Created</div><div class="t rt" style="left:660.50px;top:3.81px;font-size:9.2px;transform:scaleX(0.865);transform-origin:0 0;color:#101010;">0 %</div><svg style="left:93px;top:1.6px" width="13" height="12" viewBox="0 0 13 12"><defs><linearGradient id="gfg" x1="0" y1="0" x2="1" y2="1"><stop offset="0" stop-color="#2c9f2e"/><stop offset=".5" stop-color="#35b83a"/><stop offset="1" stop-color="#157a1c"/></linearGradient></defs>
<path d="M1.9 2.8L.5 10.8L3.5 11.5L5.8 8.2L3.2 3.8Z" fill="#eaf3ed" stroke="#5f7d6c" stroke-width="1" stroke-linejoin="round"/>
<path d="M2.2 .7L7 .5L12.3 6.4L9 7.8L5.5 7.4L3.3 3.7L1.7 3.1Z" fill="url(#gfg)" stroke="#0e5f16" stroke-width=".8" stroke-linejoin="round"/></svg><svg style="left:433.3px;top:1.2px" width="12.2" height="12.2" viewBox="0 0 12.2 12.2"><defs><radialGradient id="prg" cx=".5" cy=".5" r=".55"><stop offset="0" stop-color="#fff8d8"/><stop offset=".3" stop-color="#ffefc0"/><stop offset=".44" stop-color="#efa448"/><stop offset=".75" stop-color="#d27416"/><stop offset="1" stop-color="#a9570d"/></radialGradient></defs>
<circle cx="6.1" cy="6.1" r="5.8" fill="url(#prg)" stroke="#9c561a" stroke-width=".6"/></svg><svg style="left:529.2px;top:1.2px" width="10" height="12.2" viewBox="0 0 10 12.2"><defs><linearGradient id="dcg" x1="0" y1="0" x2=".6" y2="1"><stop offset="0" stop-color="#fdfeff"/><stop offset="1" stop-color="#c2dbf3"/></linearGradient></defs>
<path d="M.5 .5H6.6L9.5 3.4V11.7H.5Z" fill="url(#dcg)" stroke="#a4bedb" stroke-width=".8"/>
<path d="M6.6 .5V3.4H9.5Z" fill="#7d9cc4" stroke="#7d9cc4" stroke-width=".4"/></svg></div>
<div class="a desc" style="left:12px;top:687.0px;width:714.8px;height:26.5px;border-left:1px solid #cfcdc0;overflow:hidden"><div class="t dl" style="left:15.30px;top:3.78px;font-size:9.0px;font-weight:bold;transform:scaleX(0.9693);transform-origin:0 0;">This business requirements group defines operations that should</div><div class="t dl" style="left:15.30px;top:13.53px;font-size:9.0px;font-weight:bold;transform:scaleX(0.9911);transform-origin:0 0;">be performed to keep your product/service/solution operating</div><div class="t dl" style="left:15.30px;top:22.98px;font-size:9.0px;font-weight:bold;transform:scaleX(0.9768);transform-origin:0 0;">over a certain period of time. Both Operational Requirements</div></div>
<div class="a row" style="left:12px;top:670.5px;width:714.8px;height:17px;border-left:1px solid #a3b1bd"><div class="a vs" style="left:40px;top:0;width:1px;height:15px"></div><div class="a vs" style="left:122px;top:0;width:1px;height:15px"></div><div class="a vs" style="left:430.3px;top:0;width:1px;height:15px"></div><div class="a vs" style="left:525.7px;top:0;width:1px;height:15px"></div><div class="a vs" style="left:618.9px;top:0;width:1px;height:15px"></div><div class="a cb" style="left:14.4px;top:2.7px;width:10.4px;height:10px"></div><div class="t rt" style="left:124.50px;top:3.81px;font-size:9.2px;transform:scaleX(0.8575);transform-origin:0 0;color:#101010;">2.3 Category #2: Operational Requirements.</div><div class="t rt" style="left:448.70px;top:3.81px;font-size:9.2px;transform:scaleX(0.865);transform-origin:0 0;color:#101010;">Normal</div><div class="t rt" style="left:542.80px;top:3.81px;font-size:9.2px;transform:scaleX(0.865);transform-origin:0 0;color:#101010;">Created</div><div class="t rt" style="left:660.50px;top:3.81px;font-size:9.2px;transform:scaleX(0.865);transform-origin:0 0;color:#101010;">0 %</div><svg style="left:93px;top:1.6px" width="13" height="12" viewBox="0 0 13 12"><defs><linearGradient id="gfg" x1="0" y1="0" x2="1" y2="1"><stop offset="0" stop-color="#2c9f2e"/><stop offset=".5" stop-color="#35b83a"/><stop offset="1" stop-color="#157a1c"/></linearGradient></defs>
<path d="M1.9 2.8L.5 10.8L3.5 11.5L5.8 8.2L3.2 3.8Z" fill="#eaf3ed" stroke="#5f7d6c" stroke-width="1" stroke-linejoin="round"/>
<path d="M2.2 .7L7 .5L12.3 6.4L9 7.8L5.5 7.4L3.3 3.7L1.7 3.1Z" fill="url(#gfg)" stroke="#0e5f16" stroke-width=".8" stroke-linejoin="round"/></svg><svg style="left:433.3px;top:1.2px" width="12.2" height="12.2" viewBox="0 0 12.2 12.2"><defs><radialGradient id="prg" cx=".5" cy=".5" r=".55"><stop offset="0" stop-color="#fff8d8"/><stop offset=".3" stop-color="#ffefc0"/><stop offset=".44" stop-color="#efa448"/><stop offset=".75" stop-color="#d27416"/><stop offset="1" stop-color="#a9570d"/></radialGradient></defs>
<circle cx="6.1" cy="6.1" r="5.8" fill="url(#prg)" stroke="#9c561a" stroke-width=".6"/></svg><svg style="left:529.2px;top:1.2px" width="10" height="12.2" viewBox="0 0 10 12.2"><defs><linearGradient id="dcg" x1="0" y1="0" x2=".6" y2="1"><stop offset="0" stop-color="#fdfeff"/><stop offset="1" stop-color="#c2dbf3"/></linearGradient></defs>
<path d="M.5 .5H6.6L9.5 3.4V11.7H.5Z" fill="url(#dcg)" stroke="#a4bedb" stroke-width=".8"/>
<path d="M6.6 .5V3.4H9.5Z" fill="#7d9cc4" stroke="#7d9cc4" stroke-width=".4"/></svg></div>
<div class="a " style="left:2px;top:713.2px;width:725.5px;height:17.8px;background:#fffdea;border-top:1px solid #d0cec2"></div>
<div class="a " style="left:135.5px;top:716px;width:307.5px;height:13px;background:linear-gradient(#f4f4f4,#e9e9e9);border:1px solid #e0e0e0"></div>
<div class="t hb" style="left:139.00px;top:718.58px;font-size:9.0px;font-weight:bold;transform:scaleX(0.97);transform-origin:0 0;">Count: 20</div>
<div class="a " style="left:0px;top:57px;width:1.8px;height:674px;background:#c9c9c8"></div>
<div class="a " style="left:0px;top:730.5px;width:741px;height:1px;background:#a8a8a8"></div>
<div class="a " style="left:726.8px;top:57px;width:13.7px;height:674px;background:linear-gradient(90deg,#e9e9e9 0,#f6f6f6 10%,#fbfbfb 50%,#ececec)"></div>
<div class="a " style="left:728.3px;top:71.2px;width:11px;height:250.5px;background:linear-gradient(90deg,#f6f6f7,#e4e4e8 50%,#d0d0d6);border:1px solid #adadb3;border-radius:1.5px"></div>
<svg style="left:732px;top:63.2px" width="4.4" height="2.6" viewBox="0 0 4.4 2.6"><path d="M0 2.6H4.4L2.2 0Z" fill="#333"/></svg>
<svg style="left:732.1px;top:723.6px" width="4.4" height="2.4" viewBox="0 0 4.4 2.4"><path d="M0 0H4.4L2.2 2.4Z" fill="#333"/></svg>
<div class="a " style="left:731.3px;top:194.2px;width:4.2px;height:1px;background:#7d7d83"></div>
<div class="a " style="left:731.3px;top:196.6px;width:4.2px;height:1px;background:#7d7d83"></div>
<div class="a " style="left:731.3px;top:199px;width:4.2px;height:1px;background:#7d7d83"></div>
<div class="a " style="left:740.3px;top:57px;width:1.7px;height:697px;background:#4e4e54"></div>
<div class="a " style="left:0px;top:731.5px;width:740.7px;height:22px;background:#fff"></div>
<div class="a " style="left:4.3px;top:733.6px;width:52px;height:17.6px;background:linear-gradient(#f6f6f6,#e9e9e9 45%,#cfcfcf);border:1px solid #b9b9b9;border-top-color:#dedede"></div>
<div class="a " style="left:56.3px;top:733.6px;width:18px;height:17.6px;background:linear-gradient(#f8f8f8,#efefef 45%,#dedede);border:1px solid #c4c4c4;border-top-color:#e4e4e4"></div>
<div class="t rt" style="left:4.90px;top:738.10px;font-size:8.5px;transform:scaleX(0.95);transform-origin:0 0;color:#1c1c1c;">Note</div>
<div class="t rt" style="left:57.90px;top:738.10px;font-size:8.5px;transform:scaleX(0.95);transform-origin:0 0;color:#1c1c1c;">S...</div>
<div class="a " style="left:0px;top:753px;width:960px;height:1px;background:#b5b5b5"></div>
<div class="a " style="left:0px;top:754px;width:960px;height:12px;background:#f4f3f3"></div>
<div class="a " style="left:0px;top:765.8px;width:960px;height:2.2px;background:linear-gradient(#b4b4b4,#c6c6c6)"></div>
<div class="a " style="left:45px;top:766.2px;width:44px;height:3px;background:#d4d4d4;border:1px solid #858585;border-bottom:none;border-radius:1px 1px 0 0"></div>
<div class="a " style="left:91px;top:766.2px;width:44px;height:3px;background:#d4d4d4;border:1px solid #858585;border-bottom:none;border-radius:1px 1px 0 0"></div>
<div class="a " style="left:184px;top:766.2px;width:44px;height:3px;background:#d4d4d4;border:1px solid #858585;border-bottom:none;border-radius:1px 1px 0 0"></div>
<div class="a " style="left:230px;top:766.2px;width:44px;height:3px;background:#d4d4d4;border:1px solid #858585;border-bottom:none;border-radius:1px 1px 0 0"></div>
<div class="a " style="left:276.5px;top:766.2px;width:44px;height:3px;background:#d4d4d4;border:1px solid #858585;border-bottom:none;border-radius:1px 1px 0 0"></div>
<div class="a " style="left:742px;top:57px;width:218px;height:697px;background:#fafafa"></div>
<div class="a " style="left:958.9px;top:57px;width:1.1px;height:697px;background:#3c3c40"></div>
<div class="a " style="left:742px;top:57px;width:216.3px;height:350px;background:#fff;border:1px solid #b9b9b9;border-top-color:#9b9b9b"></div>
<div class="a " style="left:742px;top:56.8px;width:216.3px;height:1.3px;background:linear-gradient(90deg,#808083 0,#808083 60%,#c4c4c4 64%)"></div>
<div class="t " style="left:745.00px;top:62.19px;font-size:8.4px;transform:scaleX(0.945);transform-origin:0 0;color:#1c1c1c;">Categories Bar</div>
<div class="a " style="left:743px;top:74px;width:214.5px;height:22.5px;background:linear-gradient(#fdfdfe,#f1f3fa 35%,#dfe4f5 60%,#e4e8f6);border-bottom:1px solid #9d9fa5"></div>
<div class="a " style="left:745.6px;top:77.5px;width:1.6px;height:16px;background:repeating-linear-gradient(#aab2c8 0,#aab2c8 1px,transparent 1px,transparent 2.25px);opacity:.8"></div>
<svg style="left:752.8px;top:80px" width="12" height="12" viewBox="0 0 12 12"><rect x=".6" y="1.4" width="10" height="9" fill="#fff" stroke="#dfe3ec" stroke-width=".4"/><path d="M.6 11.2H10.6" stroke="#8e93a3" stroke-width="1.1"/><rect x=".6" y="1.4" width="9" height="1.6" fill="#46a7b8"/><path d="M6.6 2H9V.4L11.8 2.6L9 4.8V3.2H6.6Z" fill="#3aa84c" stroke="#238237" stroke-width=".3"/></svg>
<svg style="left:770.2px;top:80px" width="12.4" height="12" viewBox="0 0 12.4 12"><path d="M.6 2.4H5.4" stroke="#5b7ecb" stroke-width="1.6"/><path d="M2.4 3V10.4M2.4 5.4H4M2.4 8H4M2.4 10.4H4" stroke="#5b7ecb" stroke-width=".9" fill="none"/>
<rect x="4" y="4.4" width="4.2" height="1.9" fill="#4a78c8"/><rect x="4" y="7" width="4.2" height="1.9" fill="#4a78c8"/><rect x="4" y="9.6" width="4.2" height="1.9" fill="#4a78c8"/>
<path d="M5.8 5.4V11" stroke="#dfe8fa" stroke-width=".6"/>
<path d="M9.6 .4V5M7.4 2.6H11.8" stroke="#3aa84c" stroke-width="1.6"/></svg>
<svg style="left:789px;top:80px" width="12" height="12" viewBox="0 0 12 12"><rect x=".6" y="1.4" width="10" height="9" fill="#fff" stroke="#dfe3ec" stroke-width=".4"/><path d="M.6 11.2H10.6" stroke="#8e93a3" stroke-width="1.1"/><rect x=".6" y="1.4" width="6" height="1.6" fill="#46a7b8"/><path d="M2.4 8.8L3.4 6.6L9.6 .8L11 2.2L4.8 8Z" fill="#6aa84a" stroke="#4c7f33" stroke-width=".3"/><path d="M9.6 .8L10.4 .2L11.6 1.4L11 2.2Z" fill="#d9534f"/><path d="M2.4 8.8L3.4 6.6L4.8 8Z" fill="#444"/></svg>
<svg style="left:806.8px;top:80px" width="12.4" height="12" viewBox="0 0 12.4 12"><rect x=".6" y="1.4" width="10" height="9" fill="#fff" stroke="#dfe3ec" stroke-width=".4"/><path d="M.6 11.2H10.6" stroke="#8e93a3" stroke-width="1.1"/><rect x=".6" y="1.4" width="9" height="1.6" fill="#46a7b8"/><path d="M6.4 6.4L11.4 11.4M11.4 6.4L6.4 11.4" stroke="#d9534f" stroke-width="1.4" stroke-linecap="round"/></svg>
<svg style="left:823.2px;top:90px" width="3.8" height="2.4" viewBox="0 0 3.8 2.4"><path d="M0 0H3.8L1.9 2.4Z" fill="#111"/></svg>
<div class="a " style="left:921.2px;top:61px;width:10.2px;height:10.2px;border:1.3px solid #8793ab;background:#e8ebf2;border-radius:1px"><div class="a " style="left:1.3px;top:1.6px;width:5px;height:4.2px;background:#fff;border:.8px solid #7c88a0"><div class="a " style="left:0.9px;top:0.7px;width:2px;height:1.3px;background:#333"></div></div></div><svg style="left:934.4px;top:61.4px" width="8" height="10"><path d="M2 .6H6 M2.6 .6V4.3 M5.4 .6V4.3 M.6 4.6H7.4 M4 4.6V9" stroke="#7d7d7d" stroke-width=".9" fill="none"/></svg><div class="a " style="left:945px;top:61px;width:10.6px;height:10.2px;border:1.3px solid #b4504e;background:linear-gradient(#e7a7a5,#d88481);border-radius:1.5px"><svg style="left:2.3px;top:2px" width="4" height="4.6"><path d="M.3 .3L3.7 4.3M3.7 .3L.3 4.3" stroke="#fff" stroke-width="1.3"/></svg></div>
<div class="t " style="left:913.80px;top:100.29px;font-size:8.4px;transform:scaleX(0.9);transform-origin:0 0;color:#333;">UnD...</div>
<div class="t " style="left:942.60px;top:100.29px;font-size:8.4px;transform:scaleX(0.9);transform-origin:0 0;color:#333;">T...</div>
<div class="a " style="left:764.7px;top:123px;width:1px;height:34.5px;background:#e2e2e2"></div>
<div class="a " style="left:764.7px;top:130.5px;width:6.5px;height:1px;background:#e2e2e2"></div>
<div class="a " style="left:764.7px;top:144px;width:6.5px;height:1px;background:#e2e2e2"></div>
<div class="a " style="left:764.7px;top:157.5px;width:6.5px;height:1px;background:#e2e2e2"></div>
<div class="a " style="left:754px;top:116.2px;width:4px;height:1px;background:#e2e2e2"></div>
<svg style="left:747px;top:113px" width="7.5" height="7.5"><rect x=".4" y=".4" width="6.4" height="6.4" fill="#fff" stroke="#8e8e8e" stroke-width=".8"/><path d="M1.9 3.6H5.3" stroke="#333" stroke-width=".9"/></svg>
<div class="a " style="left:771.7px;top:110.3px;width:186px;height:13.4px;border:1px solid #3c3c3c;background:linear-gradient(90deg,#fff 0,#fff 73%,#f3f3f3 74%,#f3f3f3 100%)"></div>
<div class="a " style="left:789.5px;top:110.7px;width:120.3px;height:12px;overflow:hidden"><div class="t " style="left:0.20px;top:1.55px;font-size:8.8px;font-weight:bold;transform:scaleX(0.9741);transform-origin:0 0;color:#0c0c0c;">Business Requirements Chec</div></div>
<div class="t " style="left:0.00px;top:112.25px;font-size:8.8px;font-weight:bold;color:#111;letter-spacing:0.2px;left:auto;right:20.2px">20</div>
<div class="t " style="left:0.00px;top:112.25px;font-size:8.8px;font-weight:bold;color:#111;letter-spacing:0.2px;left:auto;right:2.6px">20</div>
<div class="a " style="left:789.5px;top:124.1px;width:120.3px;height:12px;overflow:hidden"><div class="t " style="left:0.20px;top:1.55px;font-size:8.8px;font-weight:bold;transform:scaleX(0.9936);transform-origin:0 0;color:#0c0c0c;">1.Business Requirements Ga</div></div>
<div class="t " style="left:0.00px;top:125.65px;font-size:8.8px;font-weight:bold;color:#111;letter-spacing:0.2px;left:auto;right:20.2px">5</div>
<div class="t " style="left:0.00px;top:125.65px;font-size:8.8px;font-weight:bold;color:#111;letter-spacing:0.2px;left:auto;right:2.6px">5</div>
<div class="a " style="left:789.5px;top:137.6px;width:120.3px;height:12px;overflow:hidden"><div class="t " style="left:0.20px;top:1.55px;font-size:8.8px;font-weight:bold;transform:scaleX(0.9976);transform-origin:0 0;color:#0c0c0c;">2.Business Requirements Ca</div></div>
<div class="t " style="left:0.00px;top:139.15px;font-size:8.8px;font-weight:bold;color:#111;letter-spacing:0.2px;left:auto;right:20.2px">5</div>
<div class="t " style="left:0.00px;top:139.15px;font-size:8.8px;font-weight:bold;color:#111;letter-spacing:0.2px;left:auto;right:2.6px">5</div>
<div class="a " style="left:789.5px;top:151.2px;width:120.3px;height:12px;overflow:hidden"><div class="t " style="left:0.20px;top:1.55px;font-size:8.8px;font-weight:bold;transform:scaleX(1.031);transform-origin:0 0;color:#0c0c0c;">3.10 Steps for Creating a Bu</div></div>
<div class="t " style="left:0.00px;top:152.75px;font-size:8.8px;font-weight:bold;color:#111;letter-spacing:0.2px;left:auto;right:20.2px">10</div>
<div class="t " style="left:0.00px;top:152.75px;font-size:8.8px;font-weight:bold;color:#111;letter-spacing:0.2px;left:auto;right:2.6px">10</div>
<svg style="left:757.6px;top:112.8px" width="12" height="9.6" viewBox="0 0 12 9.6"><path d="M.6 3.2L1.6 .8H4.2L5 1.8H9.4V3.2Z" fill="#f3d65a" stroke="#c9a93a" stroke-width=".5"/>
<path d="M.4 8.8L2.6 3.4H11.6L9.4 8.8Z" fill="#fbe26e" stroke="#c9a93a" stroke-width=".6" stroke-linejoin="round"/><path d="M.4 8.8H9.4" stroke="#b9982d" stroke-width=".8"/></svg>
<svg style="left:774px;top:111.6px" width="12.6" height="10.4" viewBox="0 0 12.6 10.4"><path d="M.6 1.6C2.6 .6 4.8 1 6.2 2.4C7.6 1 10 .6 12 1.6L10.8 8.4C9 7.8 7.4 8.2 6.2 9.4C5 8.2 3.4 7.8 1.8 8.4Z" fill="#fdf6ec" stroke="#c9a57b" stroke-width=".7" stroke-linejoin="round"/>
<circle cx="6.3" cy="5" r="2.7" fill="#dfeafc" stroke="#9ab4e6" stroke-width=".5"/><rect x="5.8" y="3" width="1" height="1" fill="#2f5fc4"/><rect x="5.8" y="4.4" width="1" height="2.8" fill="#2f5fc4"/></svg>
<svg style="left:774px;top:126px" width="12.4" height="9.6" viewBox="0 0 12.4 9.6"><circle cx="3.6" cy="2.8" r="2.5" fill="#f2c14a" stroke="#b98a1e" stroke-width=".5"/>
<path d="M.3 9.2C.3 6.4 2 5.4 3.6 5.4C5.2 5.4 6.6 6.4 6.6 9.2Z" fill="#4a6fd0" stroke="#2f4ea6" stroke-width=".4"/>
<circle cx="9" cy="2.8" r="2.6" fill="#8a4a1e"/><circle cx="9" cy="3.2" r="1.7" fill="#f0b04a"/>
<path d="M6 9.2C6 6.6 7.4 5.6 9 5.6C10.6 5.6 12.1 6.6 12.1 9.2Z" fill="#3f9a4a" stroke="#2b7636" stroke-width=".4"/><path d="M8.2 6L9 7.4L9.8 6" fill="#fff"/></svg>
<svg style="left:774.6px;top:138px" width="11.6" height="11.8" viewBox="0 0 11.6 11.8"><path d="M1.1 .2V11.6" stroke="#1f2a66" stroke-width="1.3"/>
<path d="M1.6 1.2C3.4 .4 4.4 2 6.2 1.6C8 1.2 9.4 .6 11.2 1V7C9.4 6.6 8 7.2 6.2 7.6C4.4 8 3.4 6.4 1.6 7.2Z" fill="#7278de" stroke="#4048b0" stroke-width=".6"/>
<path d="M6.2 1.6V7.6" stroke="#4a54b8" stroke-width=".6"/><path d="M2.4 2.2C3.6 1.8 4.4 2.8 5.6 2.6V6.4C4.4 6.6 3.6 5.6 2.4 6Z" fill="#9aa2ee"/></svg>
<svg style="left:775px;top:151.4px" width="10.4" height="12" viewBox="0 0 10.4 12"><path d="M1.4 6L.8 11.6L3 10.4L5.2 11.8L7.4 10.4L9.6 11.6L9 6Z" fill="#c92a1e" stroke="#9a1a12" stroke-width=".4"/>
<path d="M5.2 .3L6.6 1.1L8.2 1L8.8 2.5L10 3.5L9.5 5L10 6.5L8.8 7.5L8.2 9L6.6 8.9L5.2 9.7L3.8 8.9L2.2 9L1.6 7.5L.4 6.5L.9 5L.4 3.5L1.6 2.5L2.2 1L3.8 1.1Z" fill="#e03a2a" stroke="#a81f14" stroke-width=".4"/>
<path d="M2.4 6.2C4 7.2 6.4 7.2 8 6.2" stroke="#ffd0c8" stroke-width=".9" fill="none"/></svg>
<div class="a " style="left:742px;top:409.6px;width:216.3px;height:320px;background:#f7f7f7;border:1px solid #b9b9b9;border-top-color:#9b9b9b"></div>
<div class="a " style="left:743px;top:410.6px;width:214.3px;height:17.2px;background:#fff"></div>
<div class="a " style="left:742px;top:409.3px;width:216.3px;height:1.3px;background:linear-gradient(90deg,#808083 0,#808083 60%,#c4c4c4 64%)"></div>
<div class="t " style="left:745.00px;top:414.59px;font-size:8.4px;transform:scaleX(0.945);transform-origin:0 0;color:#1c1c1c;">Filters Bar</div>
<div class="a " style="left:921.2px;top:413.3px;width:10.2px;height:10.2px;border:1.3px solid #8793ab;background:#e8ebf2;border-radius:1px"><div class="a " style="left:1.3px;top:1.6px;width:5px;height:4.2px;background:#fff;border:.8px solid #7c88a0"><div class="a " style="left:0.9px;top:0.7px;width:2px;height:1.3px;background:#333"></div></div></div><svg style="left:934.4px;top:413.7px" width="8" height="10"><path d="M2 .6H6 M2.6 .6V4.3 M5.4 .6V4.3 M.6 4.6H7.4 M4 4.6V9" stroke="#7d7d7d" stroke-width=".9" fill="none"/></svg><div class="a " style="left:945px;top:413.3px;width:10.6px;height:10.2px;border:1.3px solid #b4504e;background:linear-gradient(#e7a7a5,#d88481);border-radius:1.5px"><svg style="left:2.3px;top:2px" width="4" height="4.6"><path d="M.3 .3L3.7 4.3M3.7 .3L.3 4.3" stroke="#fff" stroke-width="1.3"/></svg></div>
<div class="a " style="left:743px;top:427.6px;width:214.5px;height:21.6px;background:linear-gradient(#fdfdfe,#f1f3fa 30%,#dfe4f5 55%,#e4e8f6);border-bottom:1.4px solid #85878d"></div>
<div class="a " style="left:749px;top:430.6px;width:69.5px;height:15.7px;background:#b9d6f6;border:1px solid #a9c3e4"></div>
<div class="a " style="left:814px;top:431.4px;width:4px;height:14px;background:#fff"></div>
<div class="t " style="left:751.80px;top:434.33px;font-size:9.3px;color:#4d7fb5;">Custom</div>
<div class="a " style="left:745.6px;top:431px;width:1.6px;height:16px;background:repeating-linear-gradient(#aab2c8 0,#aab2c8 1px,transparent 1px,transparent 2.25px);opacity:.8"></div>
<svg style="left:821.6px;top:433px" width="12.8" height="11.6" viewBox="0 0 12.8 11.6"><path d="M.6 6.2L2.8 4.6L4.6 5.4V10L2.2 11L.6 9.8Z" fill="#f3f5fa" stroke="#8c93b3" stroke-width=".7"/>
<path d="M4.2 8.6L7 2.2L9.6 .8L12.2 2.6L10.4 5.4L8.2 9.8L5.4 11Z" fill="#eef1f9" stroke="#8c93b3" stroke-width=".7"/>
<path d="M6 8.6L8 3.4L10.2 2L11 3.2L9.2 5L7.6 9Z" fill="#3aa84c" stroke="#1f8434" stroke-width=".4"/></svg>
<svg style="left:836.6px;top:436.8px" width="3.6" height="2.3" viewBox="0 0 3.6 2.3"><path d="M0 0H3.6L1.8 2.3Z" fill="#111"/></svg>
<svg style="left:847.4px;top:433.4px" width="12.2" height="10.8" viewBox="0 0 12.2 10.8"><path d="M1 7.4L6.4 1.2C7 .6 7.8 .6 8.6 1L10.6 2.4C11.2 3 11.2 3.6 10.8 4.2L6.2 9.4H3.2Z" fill="#fff" stroke="#9a9ca6" stroke-width=".8" stroke-linejoin="round"/>
<path d="M3.4 10H11.6" stroke="#8d8f99" stroke-width=".9"/><path d="M3 5.4L7 9" stroke="#c9cbd3" stroke-width=".6"/></svg>
<svg style="left:867px;top:434px" width="9.4" height="10.4" viewBox="0 0 9.4 10.4"><path d="M1.2 1.6L8 9M8 1.6L1.2 9" stroke="#a9acb4" stroke-width="2.2" stroke-linecap="round"/><path d="M1.6 1.4L8 8.4M7.8 1.4L1.4 8.6" stroke="#c9ccd3" stroke-width=".7" stroke-linecap="round"/></svg>
<svg style="left:882.6px;top:442px" width="3.8" height="2.4" viewBox="0 0 3.8 2.4"><path d="M0 0H3.8L1.9 2.4Z" fill="#111"/></svg>
<svg style="left:815.6px;top:437.6px" width="2.6" height="1.8" viewBox="0 0 2.6 1.8"><path d="M0 0H2.6L1.3 1.8Z" fill="#444"/></svg>
<div class="a " style="left:743.5px;top:449.6px;width:213.5px;height:142.2px;background:#f6f6f6;border-left:1px solid #b9b9b9;border-right:1.6px solid #77777a;border-bottom:1px solid #a5a5a5"></div>
<div class="a " style="left:755.3px;top:451.0px;width:62px;height:14px;overflow:hidden"><div class="t " style="left:0.40px;top:2.99px;font-size:8.4px;transform:scaleX(0.945);transform-origin:0 0;color:#1c1c1c;">Completion</div></div>
<div class="a " style="left:944.2px;top:450.3px;width:11.6px;height:15px;background:linear-gradient(#f6f6f6,#e9e9e9 50%,#d8d8d8);border:1px solid #b7b7b7"><svg style="left:2.6px;top:5.4px" width="5" height="3"><path d="M0 0H5L2.5 2.8Z" fill="#111"/></svg></div>
<div class="a " style="left:744.5px;top:465.25px;width:211px;height:1px;background:#dcdcdc"></div>
<div class="a " style="left:755.3px;top:466.75px;width:62px;height:14px;overflow:hidden"><div class="t " style="left:0.40px;top:2.99px;font-size:8.4px;transform:scaleX(0.945);transform-origin:0 0;color:#1c1c1c;">Due Date</div></div>
<div class="a " style="left:944.2px;top:466.05px;width:11.6px;height:15px;background:linear-gradient(#f6f6f6,#e9e9e9 50%,#d8d8d8);border:1px solid #b7b7b7"><svg style="left:2.6px;top:5.4px" width="5" height="3"><path d="M0 0H5L2.5 2.8Z" fill="#111"/></svg></div>
<div class="a " style="left:744.5px;top:481.0px;width:211px;height:1px;background:#dcdcdc"></div>
<div class="a " style="left:755.3px;top:482.5px;width:62px;height:14px;overflow:hidden"><div class="t " style="left:0.40px;top:2.99px;font-size:8.4px;transform:scaleX(0.945);transform-origin:0 0;color:#1c1c1c;">Status</div></div>
<div class="a " style="left:944.2px;top:481.8px;width:11.6px;height:15px;background:linear-gradient(#f6f6f6,#e9e9e9 50%,#d8d8d8);border:1px solid #b7b7b7"><svg style="left:2.6px;top:5.4px" width="5" height="3"><path d="M0 0H5L2.5 2.8Z" fill="#111"/></svg></div>
<div class="a " style="left:744.5px;top:496.75px;width:211px;height:1px;background:#dcdcdc"></div>
<div class="a " style="left:755.3px;top:498.25px;width:62px;height:14px;overflow:hidden"><div class="t " style="left:0.40px;top:2.99px;font-size:8.4px;transform:scaleX(0.945);transform-origin:0 0;color:#1c1c1c;">Priority</div></div>
<div class="a " style="left:944.2px;top:497.55px;width:11.6px;height:15px;background:linear-gradient(#f6f6f6,#e9e9e9 50%,#d8d8d8);border:1px solid #b7b7b7"><svg style="left:2.6px;top:5.4px" width="5" height="3"><path d="M0 0H5L2.5 2.8Z" fill="#111"/></svg></div>
<div class="a " style="left:744.5px;top:512.5px;width:211px;height:1px;background:#dcdcdc"></div>
<div class="a " style="left:755.3px;top:514.0px;width:62px;height:14px;overflow:hidden"><div class="t " style="left:0.40px;top:2.99px;font-size:8.4px;transform:scaleX(0.945);transform-origin:0 0;color:#1c1c1c;">Task Name</div></div>
<div class="a " style="left:744.5px;top:528.25px;width:211px;height:1px;background:#dcdcdc"></div>
<div class="a " style="left:755.3px;top:529.75px;width:62px;height:14px;overflow:hidden"><div class="t " style="left:0.40px;top:2.99px;font-size:8.4px;transform:scaleX(0.945);transform-origin:0 0;color:#1c1c1c;">Date Created</div></div>
<div class="a " style="left:944.2px;top:529.05px;width:11.6px;height:15px;background:linear-gradient(#f6f6f6,#e9e9e9 50%,#d8d8d8);border:1px solid #b7b7b7"><svg style="left:2.6px;top:5.4px" width="5" height="3"><path d="M0 0H5L2.5 2.8Z" fill="#111"/></svg></div>
<div class="a " style="left:744.5px;top:544.0px;width:211px;height:1px;background:#dcdcdc"></div>
<div class="a " style="left:755.3px;top:545.5px;width:62px;height:14px;overflow:hidden"><div class="t " style="left:0.40px;top:2.99px;font-size:8.4px;transform:scaleX(0.945);transform-origin:0 0;color:#1c1c1c;">Date Last Modifie</div></div>
<div class="a " style="left:944.2px;top:544.8px;width:11.6px;height:15px;background:linear-gradient(#f6f6f6,#e9e9e9 50%,#d8d8d8);border:1px solid #b7b7b7"><svg style="left:2.6px;top:5.4px" width="5" height="3"><path d="M0 0H5L2.5 2.8Z" fill="#111"/></svg></div>
<div class="a " style="left:744.5px;top:559.75px;width:211px;height:1px;background:#dcdcdc"></div>
<div class="a " style="left:755.3px;top:561.25px;width:62px;height:14px;overflow:hidden"><div class="t " style="left:0.40px;top:2.99px;font-size:8.4px;transform:scaleX(0.945);transform-origin:0 0;color:#1c1c1c;">Date Opened</div></div>
<div class="a " style="left:944.2px;top:560.55px;width:11.6px;height:15px;background:linear-gradient(#f6f6f6,#e9e9e9 50%,#d8d8d8);border:1px solid #b7b7b7"><svg style="left:2.6px;top:5.4px" width="5" height="3"><path d="M0 0H5L2.5 2.8Z" fill="#111"/></svg></div>
<div class="a " style="left:744.5px;top:575.5px;width:211px;height:1px;background:#dcdcdc"></div>
<div class="a " style="left:755.3px;top:577.0px;width:62px;height:14px;overflow:hidden"><div class="t " style="left:0.40px;top:2.99px;font-size:8.4px;transform:scaleX(0.945);transform-origin:0 0;color:#1c1c1c;">Date Completed</div></div>
<div class="a " style="left:944.2px;top:576.3px;width:11.6px;height:15px;background:linear-gradient(#f6f6f6,#e9e9e9 50%,#d8d8d8);border:1px solid #b7b7b7"><svg style="left:2.6px;top:5.4px" width="5" height="3"><path d="M0 0H5L2.5 2.8Z" fill="#111"/></svg></div>
<div class="a " style="left:817.3px;top:450px;width:1px;height:141.5px;background:#c4c4c4"></div>
<div class="a " style="left:742px;top:729.5px;width:217px;height:24px;background:#fff"></div>
<div class="a " style="left:742px;top:732.7px;width:217px;height:1px;background:#cdcdcd"></div>
<div class="a " style="left:745.3px;top:733.4px;width:42.5px;height:16.4px;background:#fff;border:1px solid #c5c5c5;border-top:none"></div>
<div class="a " style="left:787.3px;top:733.4px;width:57.5px;height:16.4px;background:#e6e6e6;border:1px solid #cfcfcf"></div>
<div class="t " style="left:748.00px;top:737.19px;font-size:8.4px;transform:scaleX(0.93);transform-origin:0 0;color:#333;">Filters Bar</div>
<div class="t " style="left:790.00px;top:737.19px;font-size:8.4px;transform:scaleX(0.93);transform-origin:0 0;color:#333;">Navigation Bar</div>
<div class="a " style="left:742px;top:750.3px;width:218px;height:1px;background:#e2e2e2"></div>
<div class="t mono" style="left:760.30px;top:751.03px;font-size:12.6px;font-weight:bold;color:#2e0810;transform:scaleX(1.305);transform-origin:0 0;">www.todolistsoft.com</div>
</body></html>
